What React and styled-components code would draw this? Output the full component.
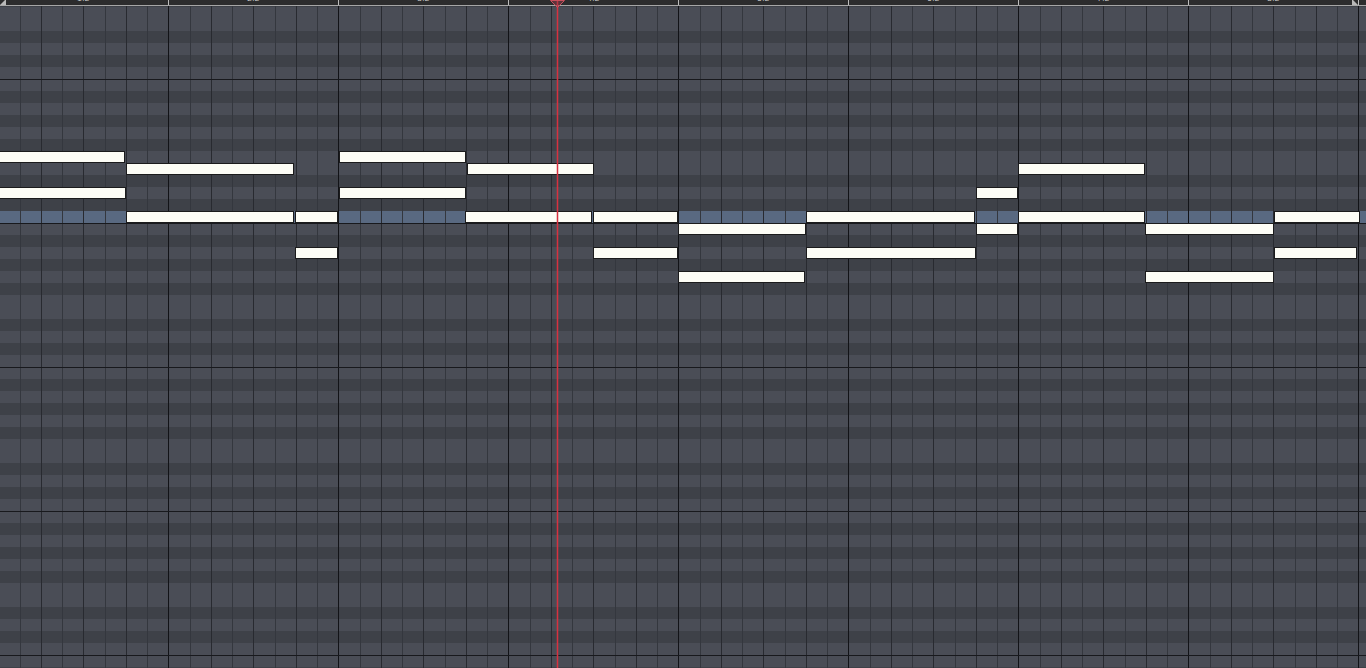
import React from 'react';
import styled, { createGlobalStyle } from 'styled-components';

const GlobalStyle = createGlobalStyle`
  html, body { margin: 0; padding: 0; background: #3f4249; overflow: hidden; }
  body { font-family: "Liberation Sans", Arial, sans-serif; }
`;

const BAR = 170;
const ROW = 12;
const FIRST_ROW = -1;
const LAST_ROW = 55;
const HIGHLIGHT_ROW = 17;

const LINE_BAR = '#121317';
const LINE_BEAT = '#282a30';
const LINE_SUB = '#34373e';

const gridLines = `linear-gradient(to right,
  ${LINE_BAR} 0 1px, transparent 1px 22px,
  ${LINE_SUB} 22px 23px, transparent 23px 43px,
  ${LINE_BEAT} 43px 44px, transparent 44px 64px,
  ${LINE_SUB} 64px 65px, transparent 65px 85px,
  ${LINE_BEAT} 85px 86px, transparent 86px 107px,
  ${LINE_SUB} 107px 108px, transparent 108px 128px,
  ${LINE_BEAT} 128px 129px, transparent 129px 149px,
  ${LINE_SUB} 149px 150px, transparent 150px 170px)`;

const Window = styled.div`
  position: relative;
  width: 1366px;
  height: 668px;
  overflow: hidden;
  display: flex;
  flex-direction: column;
  background: #3f4249;
`;

const Ruler = styled.div`
  position: relative;
  flex: 0 0 6px;
  box-sizing: border-box;
  display: flex;
  overflow: hidden;
  background: #2c2c2d;
  border-bottom: 1px solid #a6a6a6;
`;

const BarSegment = styled.div`
  flex: 0 0 ${BAR}px;
  box-sizing: border-box;
  border-left: 1px solid #bdbdbd;
  display: flex;
  justify-content: center;
  &:first-child { margin-left: -2px; }
`;

const BarLabel = styled.span`
  font-size: 8px;
  line-height: 8px;
  margin-top: -5px;
  color: #d2d2d2;
  letter-spacing: 0.5px;
`;

const LoopMarker = styled.svg`
  position: absolute;
  top: 0;
  ${(p) => (p.$side === 'left' ? 'left: 0;' : 'right: 8px;')}
  width: 7px;
  height: 6px;
`;

const Grid = styled.div`
  position: relative;
  flex: 1 1 auto;
  overflow: hidden;
`;

const RowStack = styled.div`
  display: flex;
  flex-direction: column;
  margin-top: -11px;
`;

const Row = styled.div`
  flex: 0 0 ${ROW}px;
  box-sizing: border-box;
  background-color: ${(p) => (p.$highlight ? '#596981' : p.$black ? '#3e4148' : '#4a4d56')};
  background-image: ${gridLines};
  background-size: ${BAR}px 100%;
  background-position: -2px 0;
  background-origin: border-box;
  border-top: ${(p) => (p.$octave ? `1px solid #18191d` : 'none')};
`;

const NoteLayer = styled.div`
  position: absolute;
  inset: 0;
  pointer-events: none;
`;

const Note = styled.div`
  position: absolute;
  height: ${ROW}px;
  box-sizing: border-box;
  background: #fdfdf6;
  border: 1px solid #1b1b1c;
`;

const Playhead = styled.div`
  position: absolute;
  z-index: 2;
  top: 0;
  bottom: 0;
  left: 557px;
  width: 1px;
  background: #d8303f;
  box-shadow: 0 0 0 0.6px rgba(200, 60, 75, 0.45);
`;

const PlayheadMarker = styled.svg`
  position: absolute;
  z-index: 3;
  top: 0;
  left: 550px;
  width: 15px;
  height: 8px;
`;

const notes = [
  // [row, left, right(exclusive)]
  [12, -5, 125], [12, 339, 466],
  [13, 126, 294], [13, 467, 594], [13, 1018, 1145],
  [15, -5, 126], [15, 339, 466], [15, 976, 1018],
  [17, 126, 294], [17, 295, 338], [17, 465, 592], [17, 593, 678], [17, 806, 975], [17, 1018, 1145], [17, 1274, 1360],
  [18, 678, 806], [18, 976, 1018], [18, 1145, 1274],
  [20, 295, 338], [20, 593, 678], [20, 806, 976], [20, 1274, 1357],
  [22, 678, 805], [22, 1145, 1274],
];

const BLACK = new Set([1, 3, 6, 8, 10]);
const semitone = (k) => (((5 - k) % 12) + 12) % 12;

const bars = ['1.2', '2.2', '3.2', '4.2', '5.2', '6.2', '7.2', '8.2', '9.2'];

export default function App() {
  const rows = [];
  for (let k = FIRST_ROW; k <= LAST_ROW; k++) rows.push(k);

  return (
    <>
      <GlobalStyle />
      <Window>
        <Ruler>
          {bars.map((b) => (
            <BarSegment key={b}>
              <BarLabel>{b}</BarLabel>
            </BarSegment>
          ))}
          <LoopMarker $side="left" viewBox="0 0 7 6">
            <polygon points="0,5 5,0 6,0 6,5" fill="#b9b9b9" />
          </LoopMarker>
          <LoopMarker $side="right" viewBox="0 0 7 6">
            <polygon points="1,0 2,0 7,5 1,5" fill="#b9b9b9" />
          </LoopMarker>
        </Ruler>
        <Grid>
          <RowStack>
            {rows.map((k) => {
              const s = semitone(k);
              return (
                <Row
                  key={k}
                  $black={BLACK.has(s)}
                  $octave={s === 11}
                  $highlight={k === HIGHLIGHT_ROW}
                />
              );
            })}
          </RowStack>
          <NoteLayer>
            {notes.map(([k, l, r], i) => (
              <Note key={i} style={{ top: 1 + ROW * k, left: l, width: r - l }} />
            ))}
          </NoteLayer>
        </Grid>
        <Playhead />
        <PlayheadMarker viewBox="0 0 15 8">
          <polygon points="0.5,0.5 14.5,0.5 7.5,7.5" fill="rgba(150,60,75,0.45)" stroke="#c9505d" strokeWidth="1" />
        </PlayheadMarker>
      </Window>
    </>
  );
}
